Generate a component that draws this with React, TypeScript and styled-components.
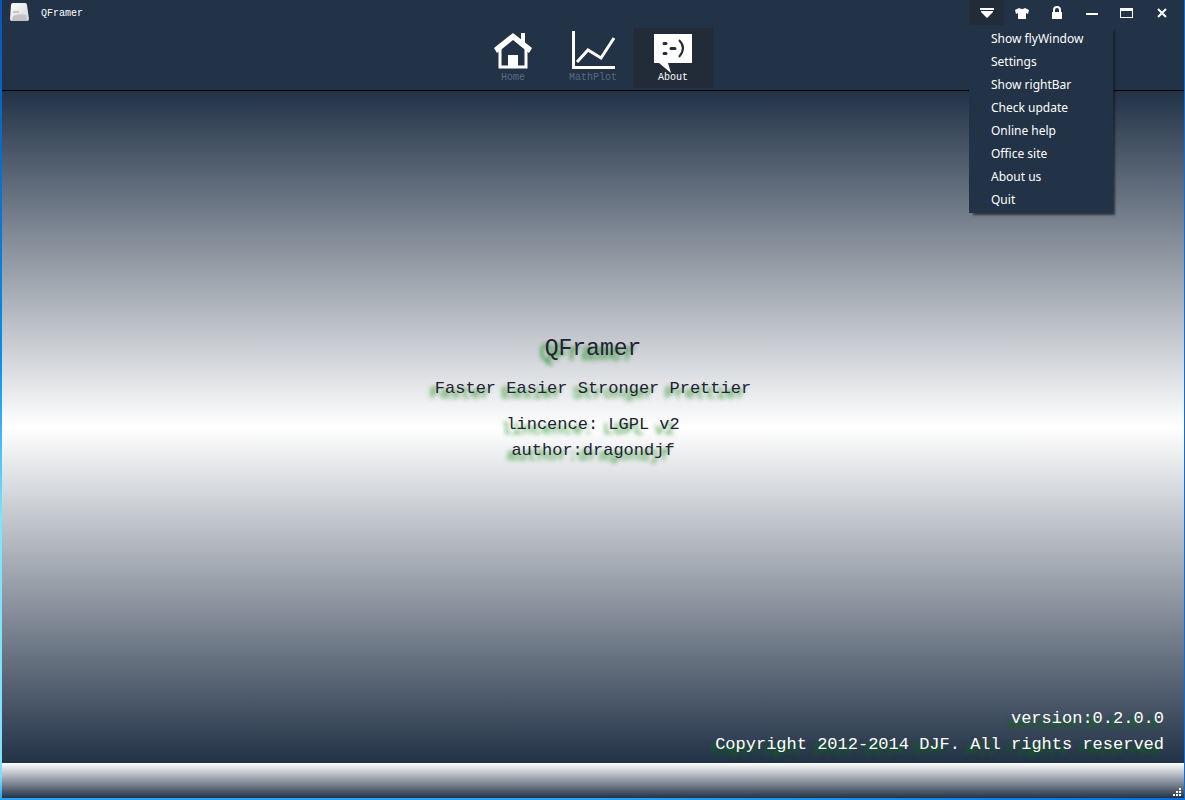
import React from "react";
import styled, { createGlobalStyle, css } from "styled-components";

const NAVY = "#223247";
const ACTIVE = "#222c38";
const MONO = `"Liberation Mono", monospace`;

const GlobalStyle = createGlobalStyle`
  * { box-sizing: border-box; }
  body { margin: 0; }
`;

const Desktop = styled.div`
  min-height: 100vh;
  display: flex;
  padding: 0 1px 2px 2px;
  background: linear-gradient(90deg, transparent 50%, #0a6fd8 100%),
    linear-gradient(180deg, #0a55b8 0%, #0a8ce8 45%, #7fe6fa 65%, #7fe0fa 97%, #2aa0f0 100%);
`;

const Window = styled.div`
  flex: 1;
  display: flex;
  flex-direction: column;
`;

const Header = styled.header`
  background: ${NAVY};
  border-bottom: 1px solid #000;
  padding-bottom: 2px;
`;

const TitleBar = styled.div`
  display: flex;
  justify-content: space-between;
  height: 28px;
  padding: 0 5px 0 6px;
`;

const Brand = styled.div`
  display: flex;
  align-items: center;
  gap: 11px;
  height: 26px;
  color: #fff;
  font: 10px/12px ${MONO};
`;

const BrandName = styled.span`
  padding-top: 2px;
`;

const Controls = styled.div`
  display: flex;
  position: relative;
`;

const ControlButton = styled.button<{ $open?: boolean }>`
  display: flex;
  align-items: center;
  justify-content: center;
  width: 35px;
  height: 25px;
  padding: 0;
  border: 0;
  background: ${(p) => (p.$open ? ACTIVE : "transparent")};
`;

const Menu = styled.div`
  position: absolute;
  z-index: 2;
  top: 27px;
  left: 0;
  width: 144px;
  padding-bottom: 2px;
  background: ${NAVY};
  box-shadow: 3px 3px 2px -1px rgba(20, 24, 32, 0.7);
`;

const MenuItem = styled.button`
  display: block;
  width: 100%;
  padding: 0 0 0 22px;
  border: 0;
  background: transparent;
  color: #fff;
  text-align: left;
  white-space: nowrap;
  font: 12px/23px "Noto Sans", sans-serif;
`;

const Tabs = styled.nav`
  display: flex;
  justify-content: center;
`;

const Tab = styled.button<{ $active?: boolean }>`
  display: flex;
  flex-direction: column;
  align-items: center;
  width: 80px;
  height: 60px;
  padding: 0;
  border: 0;
  background: transparent;
  color: #5c6b80;
  font: 10px/12px ${MONO};
  ${(p) =>
    p.$active &&
    css`
      background: ${ACTIVE};
      color: #fff;
    `}
`;

const Content = styled.main`
  flex: 1;
  display: flex;
  flex-direction: column;
  padding: 0 20px 5px;
  background: linear-gradient(180deg, ${NAVY}, #fff 50%, ${NAVY});
  font: 17px/26px ${MONO};
`;

const About = styled.section`
  flex: 1;
  display: flex;
  flex-direction: column;
  align-items: center;
  justify-content: center;
  color: #223;
  text-shadow: -5px 5px 4px rgba(0, 128, 0, 0.8);
`;

const AppName = styled.h1`
  margin: 0 0 12px;
  font-size: 23px;
  font-weight: 400;
  line-height: 30px;
`;

const Slogan = styled.p`
  margin: 0 0 10px;
`;

const Line = styled.p`
  margin: 0;
`;

const Credits = styled.footer`
  color: #fff;
  text-align: right;
  text-shadow: -5px 5px 4px rgba(0, 110, 0, 0.8);
`;

const StatusBar = styled.div`
  display: flex;
  align-items: flex-end;
  justify-content: flex-end;
  height: 35px;
  padding: 1px 2px;
  background: linear-gradient(180deg, #fff, ${NAVY});
`;

const AppIcon = () => (
  <svg width="22" height="20" viewBox="0 0 22 20" aria-hidden="true">
    <defs>
      <linearGradient id="shell" x1="0" y1="0" x2="1" y2="1">
        <stop offset="0" stopColor="#fff" />
        <stop offset="1" stopColor="#d4d4d4" />
      </linearGradient>
    </defs>
    <path d="M5 0h12q2 0 2 2l2 14q0 2-2 2H4q-2 0-2-2L3 2q0-2 2-2z" fill="url(#shell)" />
    <path d="M5 13q6-3 13-1l1 6H4z" fill="#c2c2c2" />
    <path d="M5 9h6" stroke="#999" />
  </svg>
);

const HomeIcon = () => (
  <svg width="48" height="44" viewBox="0 0 48 44" aria-hidden="true">
    <path d="M32 5h4v11l-4-4z" fill="#fff" />
    <path d="M24 5l19 15-3 5L24 12 8 25l-3-5z" fill="#fff" />
    <path d="M11 21v18h26V21" fill="none" stroke="#fff" strokeWidth="3" />
    <path d="M19 27h10v13H19z" fill="#fff" />
  </svg>
);

const PlotIcon = () => (
  <svg width="48" height="44" viewBox="0 0 48 44" fill="none" stroke="#fff" strokeWidth="3" aria-hidden="true">
    <path d="M4.500 3v36.500H46" />
    <path d="M8 34l11-12 13 8 13-20" />
  </svg>
);

const TalkIcon = () => (
  <svg width="48" height="46" viewBox="0 0 48 46" aria-hidden="true">
    <path d="M5 6h38v29H19l3 10-12-10H5z" fill="#fff" />
    <path d="M15 15.500h2M15 25.500h2M22 20.500h4" stroke={ACTIVE} strokeWidth="3" strokeLinecap="round" />
    <path d="M30 12q8 8 0 17" fill="none" stroke={ACTIVE} strokeWidth="2" />
  </svg>
);

const IconSlot = styled.span`
  height: 44px;
  display: block;
`;

const MenuIcon = () => (
  <svg width="15" height="12" viewBox="0 0 15 12" fill="#fff" aria-hidden="true">
    <path d="M1 1h14v2H1zM2 4h12v1L8 11 2 5z" />
  </svg>
);

const ShirtIcon = () => (
  <svg width="14" height="12" viewBox="0 0 14 12" fill="#fff" aria-hidden="true">
    <path d="M4 1q3 2 6 0l4 2-1 4-2-1v6H3V6L1 7 0 3z" />
  </svg>
);

const LockIcon = () => (
  <svg width="12" height="14" viewBox="0 0 12 14" aria-hidden="true">
    <path d="M1 6h10v7H1z" fill="#fff" />
    <path d="M3 7V4q0-3 3-3t3 3v3" fill="none" stroke="#fff" strokeWidth="2" />
  </svg>
);

const MinimizeIcon = () => (
  <svg width="12" height="12" viewBox="0 0 12 12" aria-hidden="true">
    <path d="M0 6h12v2H0z" fill="#fff" />
  </svg>
);

const MaximizeIcon = () => (
  <svg width="14" height="12" viewBox="0 0 14 12" aria-hidden="true">
    <path d="M0 1h13v10H0zM1 4v6h11V4z" fill="#fff" fillRule="evenodd" />
  </svg>
);

const CloseIcon = () => (
  <svg width="10" height="10" viewBox="0 0 10 10" aria-hidden="true">
    <path d="M1 1l8 8M9 1L1 9" stroke="#fff" strokeWidth="2" />
  </svg>
);

const GripIcon = () => (
  <svg width="9" height="9" viewBox="0 0 9 9" fill="#fff" aria-hidden="true">
    <path d="M6 0h2v2H6zM3 3h2v2H3zM6 3h2v2H6zM0 6h2v2H0zM3 6h2v2H3zM6 6h2v2H6z" />
  </svg>
);

const controls = [
  { label: "Main menu", Icon: MenuIcon },
  { label: "Skin", Icon: ShirtIcon },
  { label: "Lock", Icon: LockIcon },
  { label: "Minimize", Icon: MinimizeIcon },
  { label: "Maximize", Icon: MaximizeIcon },
  { label: "Close", Icon: CloseIcon },
];

const menuItems = [
  "Show flyWindow",
  "Settings",
  "Show rightBar",
  "Check update",
  "Online help",
  "Office site",
  "About us",
  "Quit",
];

const tabs = [
  { label: "Home", Icon: HomeIcon },
  { label: "MathPlot", Icon: PlotIcon },
  { label: "About", Icon: TalkIcon },
];

export default function App() {
  return (
    <Desktop>
      <GlobalStyle />
      <Window>
        <Header>
          <TitleBar>
            <Brand>
              <AppIcon />
              <BrandName>QFramer</BrandName>
            </Brand>
            <Controls>
              {controls.map(({ label, Icon }, i) => (
                <ControlButton key={label} type="button" aria-label={label} $open={i === 0}>
                  <Icon />
                </ControlButton>
              ))}
              <Menu>
                {menuItems.map((item) => (
                  <MenuItem key={item} type="button">
                    {item}
                  </MenuItem>
                ))}
              </Menu>
            </Controls>
          </TitleBar>
          <Tabs>
            {tabs.map(({ label, Icon }) => (
              <Tab key={label} type="button" $active={label === "About"}>
                <IconSlot>
                  <Icon />
                </IconSlot>
                {label}
              </Tab>
            ))}
          </Tabs>
        </Header>
        <Content>
          <About>
            <AppName>QFramer</AppName>
            <Slogan>Faster Easier Stronger Prettier</Slogan>
            <Line>lincence: LGPL v2</Line>
            <Line>author:dragondjf</Line>
          </About>
          <Credits>
            <Line>version:0.2.0.0</Line>
            <Line>Copyright 2012-2014 DJF. All rights reserved</Line>
          </Credits>
        </Content>
        <StatusBar>
          <GripIcon />
        </StatusBar>
      </Window>
    </Desktop>
  );
}
